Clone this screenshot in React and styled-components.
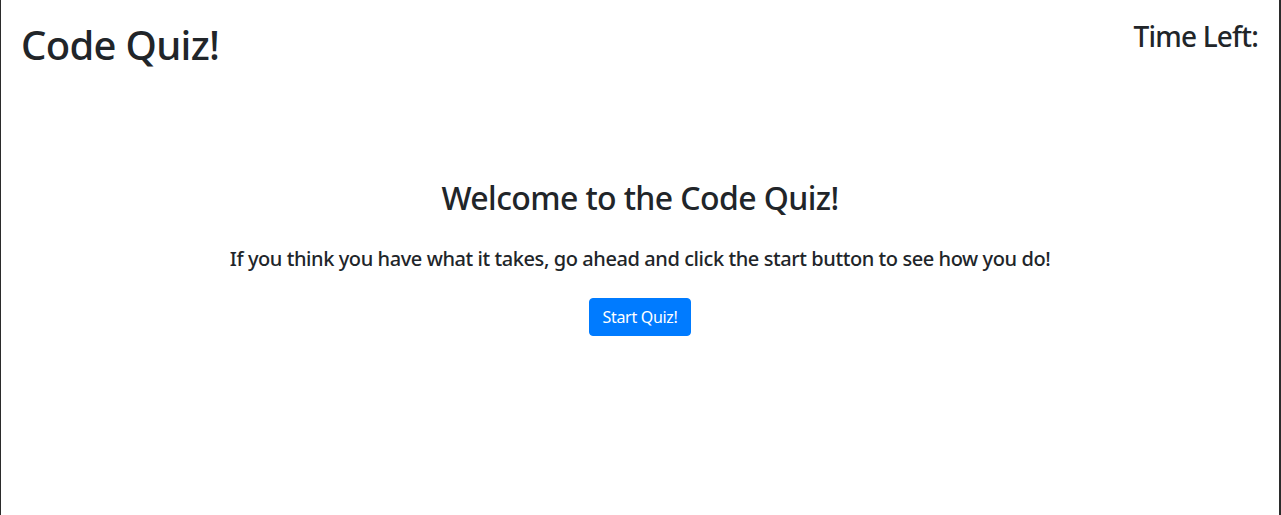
import React from 'react';
import styled, { createGlobalStyle } from 'styled-components';

const GlobalStyle = createGlobalStyle`
  html, body {
    margin: 0;
    padding: 0;
    background: #fff;
  }
  body {
    font-family: "Noto Sans", "Open Sans", sans-serif;
    color: #212529;
  }
`;

const Page = styled.div`
  box-sizing: border-box;
  min-height: 515px;
  border-left: 1px solid #2b2b2b;
  border-right: 2px solid #2b2b2b;
  display: flex;
  flex-direction: column;
`;

const Header = styled.header`
  display: flex;
  justify-content: space-between;
  align-items: flex-start;
  padding: 0 21px 0 20px;
`;

const Brand = styled.h1`
  margin: 21px 0 0;
  font-size: 40px;
  font-weight: 500;
  line-height: 1.2;
  letter-spacing: -0.7px;
`;

const Timer = styled.h3`
  margin: 20px 0 0;
  font-size: 28px;
  font-weight: 500;
  line-height: 1.2;
  letter-spacing: -0.8px;
`;

const Intro = styled.main`
  display: flex;
  flex-direction: column;
  align-items: center;
  text-align: center;
  padding-top: 110px;
`;

const Heading = styled.h2`
  margin: 0 0 30px;
  font-size: 32px;
  font-weight: 500;
  line-height: 1.2;
  letter-spacing: -0.6px;
`;

const Lead = styled.h5`
  margin: 0 0 27px;
  font-size: 20px;
  font-weight: 500;
  line-height: 1.2;
  letter-spacing: -0.42px;
`;

const StartButton = styled.button`
  font-family: inherit;
  font-size: 16px;
  line-height: 1.5;
  letter-spacing: -0.3px;
  color: #fff;
  background: #007bff;
  border: 1px solid #007bff;
  border-radius: 4px;
  padding: 6px 12px;
  cursor: pointer;
`;

export default function App() {
  return (
    <>
      <GlobalStyle />
      <Page>
        <Header>
          <Brand>Code Quiz!</Brand>
          <Timer>Time Left:</Timer>
        </Header>
        <Intro>
          <Heading>Welcome to the Code Quiz!</Heading>
          <Lead>If you think you have what it takes, go ahead and click the start button to see how you do!</Lead>
          <StartButton>Start Quiz!</StartButton>
        </Intro>
      </Page>
    </>
  );
}
